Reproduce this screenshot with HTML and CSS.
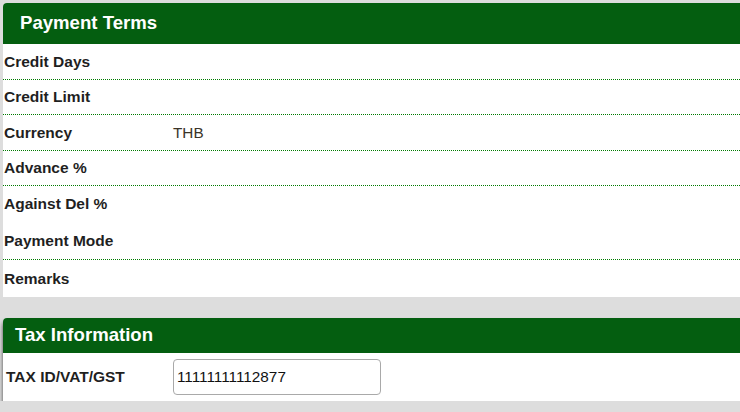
FILE: index.html
```html
<!DOCTYPE html>
<html lang="en">
<head>
    <meta charset="UTF-8">
    <title>Payment Terms</title>
    <link rel="stylesheet" href="styles.css">
</head>
<body>
    <section class="panel">
        <h2 class="panel-title">Payment Terms</h2>
        <div class="field-row">
            <span class="field-label">Credit Days</span>
            <span class="field-value"></span>
        </div>
        <div class="field-row short">
            <span class="field-label">Credit Limit</span>
            <span class="field-value"></span>
        </div>
        <div class="field-row">
            <span class="field-label">Currency</span>
            <span class="field-value">THB</span>
        </div>
        <div class="field-row short">
            <span class="field-label">Advance %</span>
            <span class="field-value"></span>
        </div>
        <div class="field-row no-line">
            <span class="field-label">Against Del %</span>
            <span class="field-value"></span>
        </div>
        <div class="field-row tall">
            <span class="field-label">Payment Mode</span>
            <span class="field-value"></span>
        </div>
        <div class="field-row last no-line">
            <span class="field-label">Remarks</span>
            <span class="field-value"></span>
        </div>
    </section>

    <section class="panel tax-panel">
        <h2 class="panel-title small">Tax Information</h2>
        <div class="tax-row">
            <label class="field-label" for="taxid">TAX ID/VAT/GST</label>
            <input class="text-input" id="taxid" type="text" value="11111111112877">
        </div>
    </section>
</body>
</html>
```

FILE: styles.css
```css
:root {
    --header-green: #045e10;
    --line-green: #007a00;
    --page-gray: #dddddd;
    --label-dark: #1f1f1f;
}

* {
    margin: 0;
    padding: 0;
    box-sizing: border-box;
}

body {
    background: var(--page-gray);
    font-family: "Liberation Sans", Arial, sans-serif;
    padding: 3px 0 0 3px;
    overflow: hidden;
}

.panel {
    background: #ffffff;
    border-top-left-radius: 4px;
}

.panel-title {
    background: var(--header-green);
    color: #ffffff;
    font-size: 18.6px;
    font-weight: 700;
    height: 41px;
    line-height: 39px;
    padding-left: 17px;
    border-top-left-radius: 4px;
}

.panel-title.small {
    height: 35px;
    line-height: 33px;
    padding-left: 12px;
}

.field-row {
    display: flex;
    align-items: center;
    height: 36px;
    border-bottom: 1px dotted var(--line-green);
}

.field-row.short {
    height: 35px;
}

.field-row.tall {
    height: 38px;
}

.field-row.last {
    height: 37px;
}

.field-row.no-line {
    border-bottom: none;
}

.field-label {
    width: 170px;
    padding-left: 1px;
    font-size: 15.5px;
    font-weight: 700;
    color: var(--label-dark);
}

.field-value {
    font-size: 15.3px;
    color: #3a3428;
}

.tax-panel {
    margin-top: 21px;
    box-shadow: 0 4px 4px rgba(0, 0, 0, 0.7);
}

.tax-row {
    display: flex;
    align-items: center;
    height: 48px;
}

.tax-row .field-label {
    padding-left: 3px;
}

.text-input {
    width: 208px;
    height: 36px;
    border: 1px solid #a9a9a9;
    border-radius: 4px;
    padding: 0 3px;
    font-family: "Liberation Sans", Arial, sans-serif;
    font-size: 15.3px;
    color: #111111;
    background: #ffffff;
}
```
